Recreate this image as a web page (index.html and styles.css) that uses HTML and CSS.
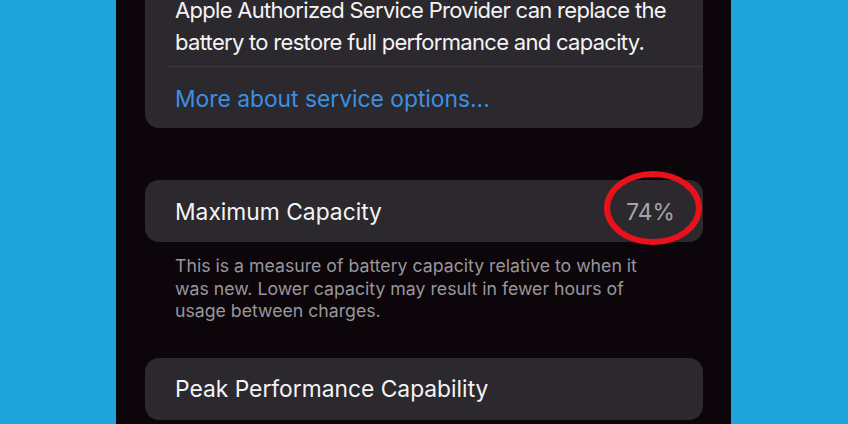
FILE: index.html
```html
<!DOCTYPE html>
<html lang="en">
<head>
    <meta charset="UTF-8">
    <meta name="viewport" content="width=device-width, initial-scale=1.0">
    <title>Battery Health</title>
    <link rel="stylesheet" href="styles.css">
</head>
<body>
<div class="screen">
    <section class="card service">
        <p class="service-text">Apple Authorized Service Provider can replace the battery to restore full performance and capacity.</p>
        <div class="divider"></div>
        <a href="#" class="service-link">More about service options...</a>
    </section>

    <section class="card row-card">
        <span class="row-label">Maximum Capacity</span>
        <span class="row-value">74%</span>
    </section>
    <p class="footnote">This is a measure of battery capacity relative to when it was new. Lower capacity may result in fewer hours of usage between charges.</p>

    <section class="card row-card peak">
        <span class="row-label">Peak Performance Capability</span>
    </section>

    <div class="highlight"></div>
</div>
</body>
</html>
```

FILE: styles.css
```css
* {
    margin: 0;
    padding: 0;
    box-sizing: border-box;
}
body {
    background: #1ea3db;
    font-family: 'Inter', 'Liberation Sans', sans-serif;
    overflow: hidden;
}
.screen {
    position: relative;
    margin-left: 116px;
    width: 615px;
    height: 424px;
    background: #0c050a;
    padding: 0 28px 0 29px;
    display: flex;
    flex-direction: column;
    overflow: hidden;
}
.screen > * {
    flex-shrink: 0;
}
.card {
    background: #2b292e;
    border-radius: 14px;
    color: #f4f3f5;
}
.service {
    margin-top: -20px;
    padding: 14px 0 13px 0;
}
.service-text {
    font-size: 22px;
    letter-spacing: -0.7px;
    line-height: 32px;
    padding: 0 20px 0 30px;
}
.divider {
    height: 1px;
    background: #3b393e;
    margin: 8px 0 16px 23px;
}
.service-link {
    display: block;
    padding: 0 30px;
    font-size: 22.8px;
    line-height: 32px;
    color: #3e8fe0;
    text-decoration: none;
}
.row-card {
    height: 62px;
    padding: 0 28px 0 30px;
    display: flex;
    align-items: center;
    justify-content: space-between;
    font-size: 22.8px;
    margin-top: 52px;
}
.row-value {
    color: #a6a4aa;
}
.footnote {
    margin-top: 13px;
    padding: 0 42px 0 30px;
    font-size: 17.7px;
    line-height: 22.5px;
    color: #99979c;
}
.peak {
    margin-top: 35px;
}
.highlight {
    position: absolute;
    left: 488px;
    top: 171px;
    width: 98px;
    height: 74px;
    border: 6px solid #e8111c;
    border-radius: 50%;
}
```
